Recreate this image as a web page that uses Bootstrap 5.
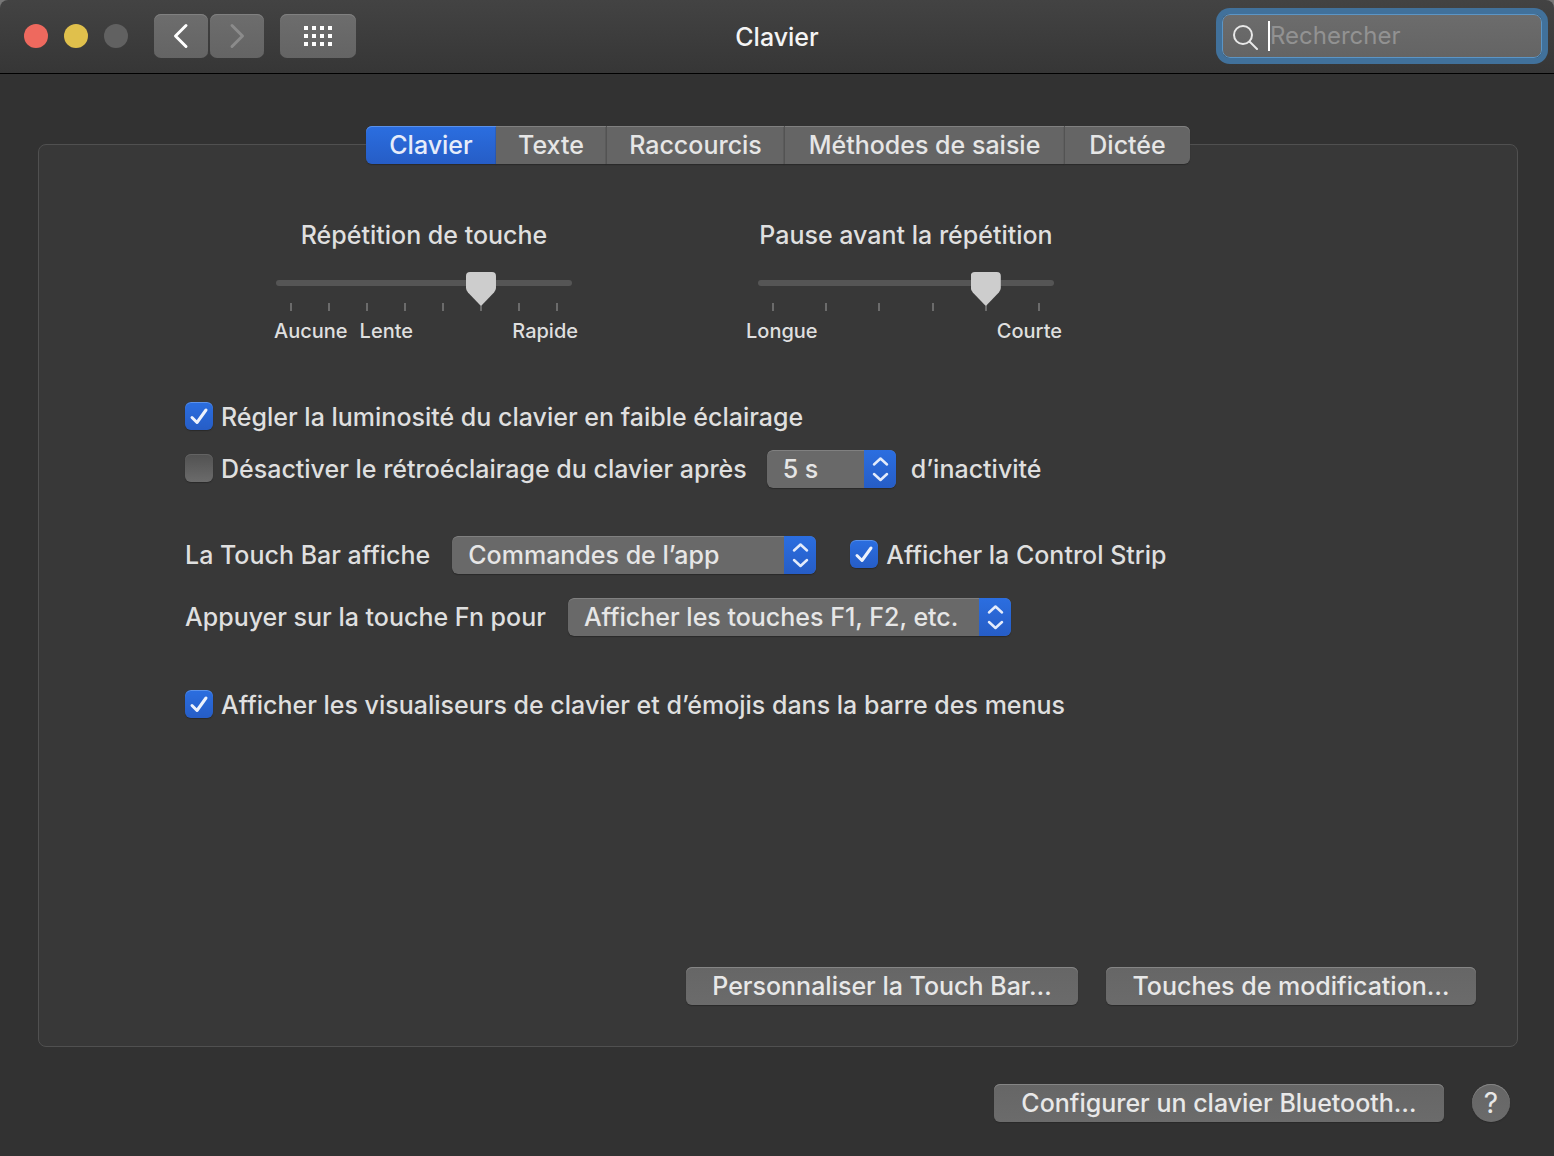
<!DOCTYPE html>
<html lang="fr">
<head>
<meta charset="utf-8">
<meta name="viewport" content="width=device-width, initial-scale=1">
<title>Clavier</title>
<link href="https://cdn.jsdelivr.net/npm/bootstrap@5.3.0/dist/css/bootstrap.min.css" rel="stylesheet">
<style>
  body { background: #323232; color: #dfdfdf; font-family: Inter, "Liberation Sans", sans-serif; font-size: 25px; line-height: 32px; font-weight: 500; }
  .title-wrap { background: #777; }
  .title-bar { height: 74px; padding: 0 12px 2px; background: linear-gradient(#434343, #363636); border-bottom: 1px solid #000; border-radius: 8px 8px 0 0; }
  .title-bar h1 { font-size: 25px; line-height: 32px; color: #f4f4f4; font-weight: 500; padding-top: 2px; }
  .side { flex: 1 1 0; }
  .lights { gap: 16px; margin: 0 26px 0 12px; }
  .light { width: 24px; height: 24px; border-radius: 50%; border: 0; padding: 0; }
  .light-close { background: #ee695e; }
  .light-min { background: #e0c04c; }
  .light-off { background: #616161; }
  .tools { gap: 2px; }
  .tool { height: 44px; width: 54px; border: 0; border-radius: 7px; padding: 0; background: linear-gradient(#6d6d6d, #646464); box-shadow: inset 0 1px #808080; }
  .tool-wide { width: 76px; }
  .search { width: 320px; height: 44px; padding-left: 10px; border: 1px solid #5b95c6; border-radius: 8px; background: linear-gradient(#6c6c6c, #646464); box-shadow: 0 0 0 6px #41719b; }
  .search svg { flex: none; }
  .search input { border: 0; outline: 0; padding: 0; background: none; color: #fff; min-width: 0; line-height: 32px; font-size: 24px; }
  .search input::placeholder { color: #929292; opacity: 1; }
  .caret { flex: none; width: 2px; height: 30px; background: #fff; margin-left: 9px; }

  .pane { margin: 70px 36px 37px 38px; border: 1px solid #505050; border-radius: 8px; background: #383838; }
  .tabs { margin-top: -19px; }
  .tabs .nav-link { height: 38px; padding: 0; line-height: 38px; color: #e6e6e6; background: #656565; border: 0; border-left: 1px solid #535353; border-radius: 0; box-shadow: inset 0 1px #808080, 0 1px 1px #2a2a2a; }
  .tabs .nav-item:first-child .nav-link { border-radius: 6px 0 0 6px; border-left: 0; }
  .tabs .nav-item:nth-child(2) .nav-link { border-left: 0; }
  .tabs .nav-item:last-child .nav-link { border-radius: 0 6px 6px 0; }
  .tabs .nav-link.active { color: #e6ecfa; background: linear-gradient(#2b6ee0, #265dc6); box-shadow: inset 0 1px #5a91ea, 0 1px 1px #2a2a2a; }
  .tab-a { width: 130px; } .tab-b { width: 110px; } .tab-c { width: 178px; } .tab-d { width: 280px; } .tab-e { width: 126px; }

  .sliders { margin: 55px 0 0 225px; gap: 162px; }
  .slider { width: 320px; }
  .slider label { margin-bottom: 21px; white-space: nowrap; }
  .slider .form-range { height: 22px; width: 296px; margin: 0 12px; display: block; position: relative; z-index: 1; }
  .form-range::-webkit-slider-runnable-track { height: 6px; background: #555; border-radius: 3px; }
  .form-range::-webkit-slider-thumb { width: 30px; height: 34px; margin-top: -8px; border: 0; border-radius: 0; background: #cdcdcd; box-shadow: none; clip-path: path("M4 0H26Q30 0 30 4V16Q30 18 28 20.500L16 33Q15 34 14 33L2 20.500Q0 18 0 16V4Q0 0 4 0Z"); }
  .form-range::-webkit-slider-thumb:active { background: #e0e0e0; }
  .ticks { margin: 9px 26px 8px; }
  .ticks span { width: 2px; height: 8px; background: #6b6b6b; }
  .legend-row { font-size: 20px; line-height: 24px; gap: 12px; padding: 0 6px 0 10px; }
  .legend-wide { padding: 0 4px 0 0; }

  .options { margin: 55px 40px 0 146px; }
  .line { height: 38px; white-space: nowrap; }
  .gap-s { margin-top: 14px; } .gap-m { margin-top: 24px; } .gap-l { margin-top: 48px; } .gap-xl { margin-top: 50px; }
  .side-s { margin: 0 15px 0 20px; } .side-m { margin: 0 34px 0 22px; }
  .tick-box { gap: 8px; }
  .tick-box .form-check-input { width: 28px; height: 28px; margin: 0 0 2px; border: 0; border-radius: 6px; flex: none; background: linear-gradient(#515151, #6b6b6b); box-shadow: 0 1px 1px #2a2a2a, inset 0 1px #636363; }
  .tick-box .form-check-input:checked { background: url("data:image/svg+xml,%3Csvg xmlns='http://www.w3.org/2000/svg' viewBox='0 0 28 28'%3E%3Cpath d='M7 15.500L12 20.500L21 8' fill='none' stroke='%23edf2fc' stroke-width='3' stroke-linecap='round' stroke-linejoin='round'/%3E%3C/svg%3E"), linear-gradient(#2b6ee0, #265dc6); box-shadow: 0 1px 1px #2a2a2a, inset 0 1px #5a91ea; }
  .popup { border-radius: 6px; overflow: hidden; box-shadow: 0 1px 1px #2a2a2a; }
  .popup .form-select { height: 38px; padding: 0 32px 0 16px; border: 0; border-radius: 6px; background: #696969; color: #e6e6e6; font-size: 25px; font-weight: 500; line-height: 38px; box-shadow: inset 0 1px #808080; }
  .popup svg { pointer-events: none; background: linear-gradient(#2b6ee0, #265dc6); }
  .popup-s { width: 129px; } .popup-m { width: 364px; } .popup-l { width: 443px; }

  .push { height: 38px; padding: 0; border: 0; border-radius: 6px; font-size: 25px; font-weight: 500; line-height: 38px; color: #e8e8e8; background: linear-gradient(#666, #6b6b6b); box-shadow: inset 0 1px #858585, 0 1px 1px #2a2a2a; }
  .push:hover { background: #777; color: #fff; }
  .push-a { width: 392px; } .push-b { width: 370px; } .push-c { width: 450px; }
  .push-help { width: 38px; border-radius: 50%; font-size: 28px; font-weight: 400; }
  .pane-actions { gap: 28px; padding: 0 41px 41px 0; }
  .foot { gap: 28px; padding: 0 44px 34px 0; }
</style>
</head>
<body class="d-flex flex-column min-vh-100">
<div class="title-wrap">
<header class="title-bar d-flex align-items-center">
  <div class="side d-flex align-items-center">
    <div class="lights d-flex">
      <button class="light light-close" aria-label="Fermer"></button>
      <button class="light light-min" aria-label="Réduire"></button>
      <button class="light light-off" aria-label="Agrandir" disabled></button>
    </div>
    <div class="tools d-flex">
      <button class="tool" aria-label="Précédent"><svg class="d-block" width="54" height="44" fill="none" stroke="#fff" stroke-width="3" stroke-linecap="round" stroke-linejoin="round"><path d="M32 11.500L21.500 22L32 32.500"/></svg></button>
      <button class="tool" aria-label="Suivant" disabled><svg class="d-block" width="54" height="44" fill="none" stroke="#8b8b8b" stroke-width="3" stroke-linecap="round" stroke-linejoin="round"><path d="M22 11.500L32.500 22L22 32.500"/></svg></button>
    </div>
    <button class="tool tool-wide ms-3" aria-label="Tout afficher"><svg class="d-block" width="76" height="44" fill="none" stroke="#fff" stroke-width="4" stroke-dasharray="4 4"><path d="M24 14H52M24 22H52M24 30H52"/></svg></button>
  </div>
  <h1 class="m-0">Clavier</h1>
  <div class="side d-flex justify-content-end">
    <div class="search d-flex align-items-center">
      <svg width="26" height="28" fill="none" stroke="#e8e8e8" stroke-width="2" stroke-linecap="round"><circle cx="10" cy="13" r="9"/><path d="M16.500 19.500L24 27"/></svg>
      <span class="caret"></span>
      <input class="flex-grow-1" type="text" placeholder="Rechercher" aria-label="Rechercher">
    </div>
  </div>
</header>
</div>

<main class="pane flex-grow-1 d-flex flex-column">
  <ul class="nav tabs justify-content-center">
    <li class="nav-item"><button class="nav-link active tab-a">Clavier</button></li>
    <li class="nav-item"><button class="nav-link tab-b">Texte</button></li>
    <li class="nav-item"><button class="nav-link tab-c">Raccourcis</button></li>
    <li class="nav-item"><button class="nav-link tab-d">Méthodes de saisie</button></li>
    <li class="nav-item"><button class="nav-link tab-e">Dictée</button></li>
  </ul>

  <div class="sliders d-flex">
    <div class="slider">
      <label class="d-block text-center" for="repeat">Répétition de touche</label>
      <input class="form-range" type="range" id="repeat" min="0" max="7" value="5">
      <div class="ticks d-flex justify-content-between"><span></span><span></span><span></span><span></span><span></span><span></span><span></span><span></span></div>
      <div class="legend-row d-flex"><span>Aucune</span><span>Lente</span><span class="ms-auto">Rapide</span></div>
    </div>
    <div class="slider">
      <label class="d-block text-center" for="delay">Pause avant la répétition</label>
      <input class="form-range" type="range" id="delay" min="0" max="5" value="4">
      <div class="ticks d-flex justify-content-between"><span></span><span></span><span></span><span></span><span></span><span></span></div>
      <div class="legend-row legend-wide d-flex"><span>Longue</span><span class="ms-auto">Courte</span></div>
    </div>
  </div>

  <div class="options">
    <div class="line d-flex align-items-center">
      <div class="tick-box d-flex align-items-center"><input class="form-check-input" type="checkbox" id="dim" checked><label for="dim">Régler la luminosité du clavier en faible éclairage</label></div>
    </div>
    <div class="line gap-s d-flex align-items-center">
      <div class="tick-box d-flex align-items-center"><input class="form-check-input" type="checkbox" id="off"><label for="off">Désactiver le rétroéclairage du clavier après</label></div>
      <div class="popup popup-s side-s position-relative">
        <select class="form-select" aria-label="Durée d’inactivité"><option>5 s</option></select>
        <svg class="position-absolute top-0 end-0" width="32" height="38" fill="none" stroke="#e3ebfb" stroke-width="2.500" stroke-linecap="round" stroke-linejoin="round"><path d="M10 14.500L16.500 8.500L23 14.500M10 24L16.500 30L23 24"/></svg>
      </div>
      <span>d’inactivité</span>
    </div>
    <div class="line gap-l d-flex align-items-center">
      <label for="bar">La Touch Bar affiche</label>
      <div class="popup popup-m side-m position-relative">
        <select class="form-select" id="bar"><option>Commandes de l’app</option></select>
        <svg class="position-absolute top-0 end-0" width="32" height="38" fill="none" stroke="#e3ebfb" stroke-width="2.500" stroke-linecap="round" stroke-linejoin="round"><path d="M10 14.500L16.500 8.500L23 14.500M10 24L16.500 30L23 24"/></svg>
      </div>
      <div class="tick-box d-flex align-items-center"><input class="form-check-input" type="checkbox" id="strip" checked><label for="strip">Afficher la Control Strip</label></div>
    </div>
    <div class="line gap-m d-flex align-items-center">
      <label for="fn">Appuyer sur la touche Fn pour</label>
      <div class="popup popup-l side-m position-relative">
        <select class="form-select" id="fn"><option>Afficher les touches F1, F2, etc.</option></select>
        <svg class="position-absolute top-0 end-0" width="32" height="38" fill="none" stroke="#e3ebfb" stroke-width="2.500" stroke-linecap="round" stroke-linejoin="round"><path d="M10 14.500L16.500 8.500L23 14.500M10 24L16.500 30L23 24"/></svg>
      </div>
    </div>
    <div class="line gap-xl d-flex align-items-center">
      <div class="tick-box d-flex align-items-center"><input class="form-check-input" type="checkbox" id="viewer" checked><label for="viewer">Afficher les visualiseurs de clavier et d’émojis dans la barre des menus</label></div>
    </div>
  </div>

  <div class="pane-actions d-flex justify-content-end mt-auto">
    <button class="btn push push-a">Personnaliser la Touch Bar…</button>
    <button class="btn push push-b">Touches de modification…</button>
  </div>
</main>

<footer class="foot d-flex justify-content-end">
  <button class="btn push push-c">Configurer un clavier Bluetooth…</button>
  <button class="btn push push-help" aria-label="Aide">?</button>
</footer>
<script src="https://cdn.jsdelivr.net/npm/bootstrap@5.3.0/dist/js/bootstrap.bundle.min.js"></script>
</body>
</html>
